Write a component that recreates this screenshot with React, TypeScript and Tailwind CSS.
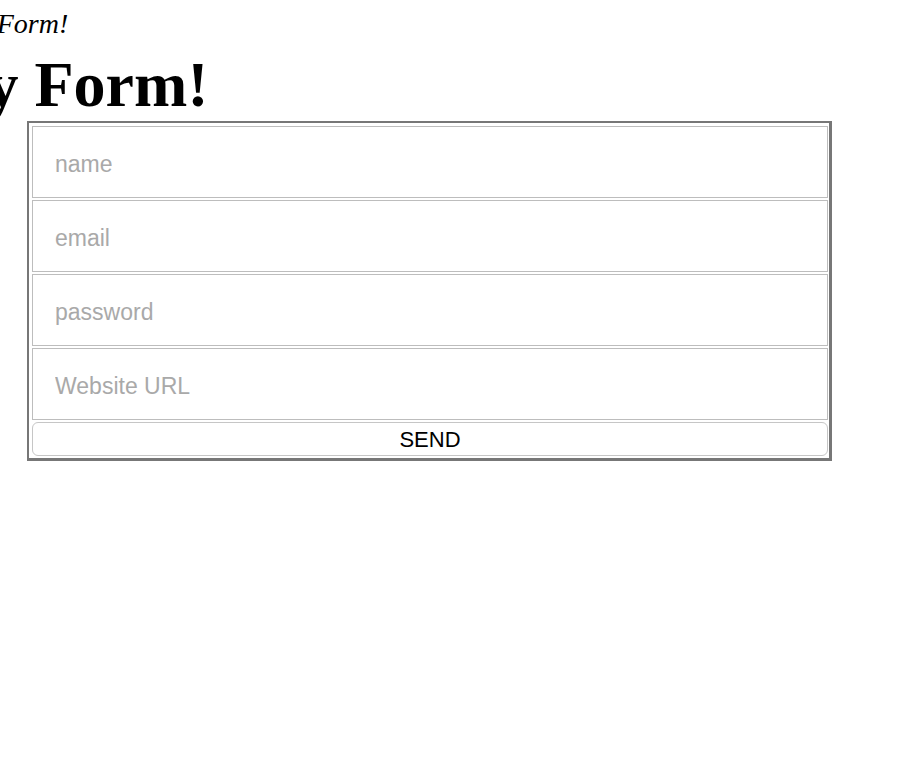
import React from "react";

export default function App() {
  const fields = [
    { ph: "name", type: "text" },
    { ph: "email", type: "email" },
    { ph: "password", type: "password" },
    { ph: "Website URL", type: "url" },
  ];
  return (
    <div className="min-h-[760px] w-[920px] overflow-hidden bg-white text-black" style={{ fontFamily: '"Liberation Serif", serif' }}>
      <p className="mt-[4px] ml-[-46px] h-[40px] text-[28px] leading-[40px] italic whitespace-nowrap">My Form!</p>
      <h1 className="mt-[9px] ml-[-74px] h-[64px] text-[64px] leading-[64px] font-bold whitespace-nowrap">My Form!</h1>
      <form
        className="mt-[4px] ml-[27px] flex w-[805px] flex-col gap-[2px] border-l-2 border-t-2 border-r-[3px] border-b-[3px] border-[#777] pt-[3px] pl-[3px] pr-[1px] pb-[2px]"
        style={{ fontFamily: '"Liberation Sans", Arial, sans-serif' }}
        onSubmit={(e) => e.preventDefault()}
      >
        {fields.map((f) => (
          <input
            key={f.ph}
            type={f.type}
            placeholder={f.ph}
            className="h-[72px] w-full border border-[#bdbdbd] bg-white pt-[4px] pl-[22px] text-[23px] text-black outline-none placeholder:text-[#a9a9a9]"
          />
        ))}
        <button
          type="submit"
          className="h-[34px] w-full rounded-[6px] border border-[#c6c6c6] bg-white pt-[2px] text-[22px] leading-none text-black"
        >
          SEND
        </button>
      </form>
    </div>
  );
}
